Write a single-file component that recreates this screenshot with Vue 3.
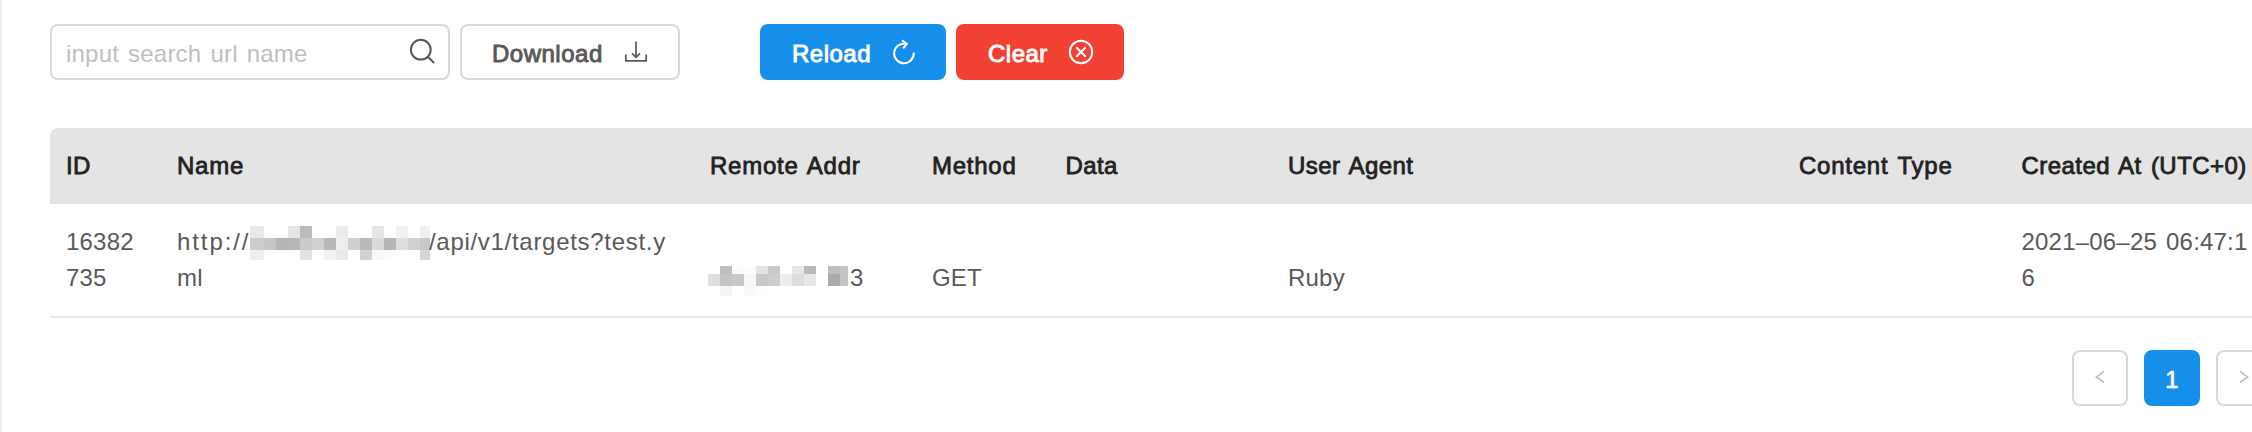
<script setup>
const columns = ['ID', 'Name', 'Remote Addr', 'Method', 'Data', 'User Agent', 'Content Type', 'Created At (UTC+0)']

// Censored blocks: column edges, row edges, and one grey level per block ('' = none)
const hostMask = {
  xs: [0, 14, 26, 38, 50, 62, 74, 86, 98, 110, 122, 134, 146, 158, 170, 180],
  ys: [0, 12, 24, 34],
  rows: [
    'e8,,,e5,bb,,,eb,,,e5,,f1,,ef',
    'cc,c6,b5,b8,cb,d0,b8,ee,cf,b9,da,b6,dd,d0,c8',
    'ee,,,,e2,,f2,e9,,d2,f8,fd,,,d6',
  ],
}
const addrMask = {
  xs: [0, 12, 24, 36, 48, 60, 72, 84, 96, 108, 120, 132, 140],
  ys: [0, 8, 20, 30],
  rows: [
    ',be,fb,fc,e4,c9,,e6,b9,,bf,c5',
    'de,c4,c8,f7,c8,cd,ed,dd,e7,,aa,c4',
    ',f5,,f9,fd,,,,,,,',
  ],
}
function blocks({ xs, ys, rows }) {
  return rows.flatMap((row, r) =>
    row.split(',').map((g, c) => ({
      x: xs[c], y: ys[r], w: xs[c + 1] - xs[c], h: ys[r + 1] - ys[r],
      g, fill: '#' + g + g + g,
    })).filter((b) => b.g)
  )
}
const hostBlocks = blocks(hostMask)
const addrBlocks = blocks(addrMask)
</script>

<template>
  <main class="page">
    <div class="toolbar">
      <div class="search">
        <span class="placeholder">input search url name</span>
        <svg class="search-icon" width="28" height="28" viewBox="0 0 28 28">
          <circle cx="12.8" cy="11.7" r="9.9" />
          <path d="M19.7 18.6 L26.1 25" />
        </svg>
      </div>
      <button class="btn download">
        <span>Download</span>
        <svg width="24" height="24" viewBox="0 0 24 24">
          <path d="M12 1.4V17M8 13.4l4 4 4-4M1.8 14.6v6.3h20.4v-6.3" />
        </svg>
      </button>
      <button class="btn reload">
        <span>Reload</span>
        <svg width="28" height="28" viewBox="0 0 28 28">
          <path d="M23.7 14.6A9.8 9.8 0 1 1 16 5.9M12 2.4L16.9 5.9L13.2 10.4" />
        </svg>
      </button>
      <button class="btn clear">
        <span>Clear</span>
        <svg width="26" height="26" viewBox="0 0 26 26">
          <circle cx="13" cy="13" r="11.2" />
          <path d="M8.3 8.3l9.4 9.4M17.7 8.3l-9.4 9.4" />
        </svg>
      </button>
    </div>

    <div class="table">
      <div class="row head">
        <div v-for="c in columns" :key="c" class="cell">{{ c }}</div>
      </div>
      <div class="row body">
        <div class="cell">16382<br />735</div>
        <div class="cell url">
          <div class="line">
            <span class="scheme">http://</span>
            <svg class="host" width="180" height="34" shape-rendering="crispEdges">
              <rect v-for="(b, i) in hostBlocks" :key="i" :x="b.x" :y="b.y" :width="b.w" :height="b.h" :fill="b.fill" />
            </svg>
            <span class="path">/api/v1/targets?test.y</span>
          </div>
          <div class="line">ml</div>
        </div>
        <div class="cell">
          <div class="line">
            <svg class="addr" width="140" height="30" shape-rendering="crispEdges">
              <rect v-for="(b, i) in addrBlocks" :key="i" :x="b.x" :y="b.y" :width="b.w" :height="b.h" :fill="b.fill" />
            </svg>
            <span>3</span>
          </div>
        </div>
        <div class="cell">GET</div>
        <div class="cell"></div>
        <div class="cell">Ruby</div>
        <div class="cell"></div>
        <div class="cell">2021–06–25 06:47:1<br />6</div>
      </div>
    </div>

    <div class="pager">
      <div class="page-btn">
        <svg width="12" height="16" viewBox="0 0 12 16"><path d="M10 2.4L2.4 8L10 13.6" /></svg>
      </div>
      <div class="page-btn active">1</div>
      <div class="page-btn">
        <svg width="12" height="16" viewBox="0 0 12 16"><path d="M2 2.4L9.6 8L2 13.6" /></svg>
      </div>
    </div>
  </main>
</template>

<style>
body {
  margin: 0;
  background: #fff;
  overflow: hidden;
}
</style>

<style scoped>
.page {
  box-sizing: border-box;
  width: 2288px;
  height: 432px;
  padding: 24px 0 0 48px;
  border-left: 2px solid #ececec;
  font-family: "Liberation Sans", Arial, sans-serif;
  font-size: 24px;
  line-height: 36px;
  letter-spacing: 0.2px;
  word-spacing: 2.2px;
  color: #595959;
}
svg {
  display: block;
  flex: none;
  fill: none;
  stroke: currentColor;
  stroke-width: 1.7;
}
.toolbar {
  display: flex;
  height: 56px;
}
.search {
  box-sizing: border-box;
  display: flex;
  align-items: center;
  justify-content: space-between;
  width: 400px;
  padding: 0 12px 0 14px;
  border: 2px solid #d9d9d9;
  border-radius: 8px;
}
.placeholder {
  padding-top: 3px;
  color: #bfbfbf;
}
.search-icon {
  stroke-width: 2;
}
.btn {
  box-sizing: border-box;
  display: flex;
  align-items: center;
  margin: 0 0 0 10px;
  padding: 0 0 0 32px;
  border: 0;
  border-radius: 8px;
  font: inherit;
  letter-spacing: 0.5px;
  color: #fff;
  -webkit-text-stroke: 0.9px currentColor;
}
.btn span {
  padding-top: 3px;
}
.download {
  width: 220px;
  padding-left: 30px;
  border: 2px solid #d9d9d9;
  background: #fff;
  color: #595959;
}
.download svg {
  margin-left: 21.5px;
}
.reload {
  width: 186px;
  margin-left: 80px;
  background: #168fea;
}
.reload svg {
  margin-left: 18.5px;
  stroke-width: 2;
}
.clear {
  width: 168px;
  background: #f04134;
}
.clear svg {
  margin-left: 20px;
  stroke-width: 2;
}
.table {
  margin-top: 48px;
}
.row {
  display: grid;
  grid-template-columns: 111px 533px 222px 133.5px 222.5px 511px 222.5px 282.5px;
}
.cell {
  padding: 20px 0 20px 16px;
  white-space: nowrap;
}
.head {
  border-radius: 8px 0 0 0;
  background: #e4e4e4;
  color: #222;
  letter-spacing: 0.75px;
  -webkit-text-stroke: 0.8px currentColor;
}
.head .cell:first-child,
.head .cell:nth-child(5) {
  letter-spacing: 0.35px;
}
.head .cell:nth-child(6),
.head .cell:last-child {
  letter-spacing: 0.45px;
}
.body {
  align-items: end;
  border-bottom: 2px solid #e8e8e8;
}
.line {
  display: flex;
  height: 36px;
}
.scheme {
  width: 73px;
  letter-spacing: 1.9px;
}
.host {
  margin-top: 2px;
  stroke: none;
}
.path {
  margin-left: -1px;
  letter-spacing: 0.7px;
}
.addr {
  margin: 6px 2px 0 -2px;
  stroke: none;
}
.pager {
  display: flex;
  gap: 16px;
  margin: 32px 0 0 2022px;
}
.page-btn {
  box-sizing: border-box;
  display: flex;
  align-items: center;
  justify-content: center;
  width: 56px;
  height: 56px;
  border: 2px solid #d9d9d9;
  border-radius: 8px;
  color: #bfbfbf;
}
.page-btn svg {
  margin-bottom: 2px;
}
.active {
  padding-top: 3px;
  border-color: #168fea;
  background: #168fea;
  color: #fff;
  -webkit-text-stroke: 0.7px currentColor;
}
</style>
